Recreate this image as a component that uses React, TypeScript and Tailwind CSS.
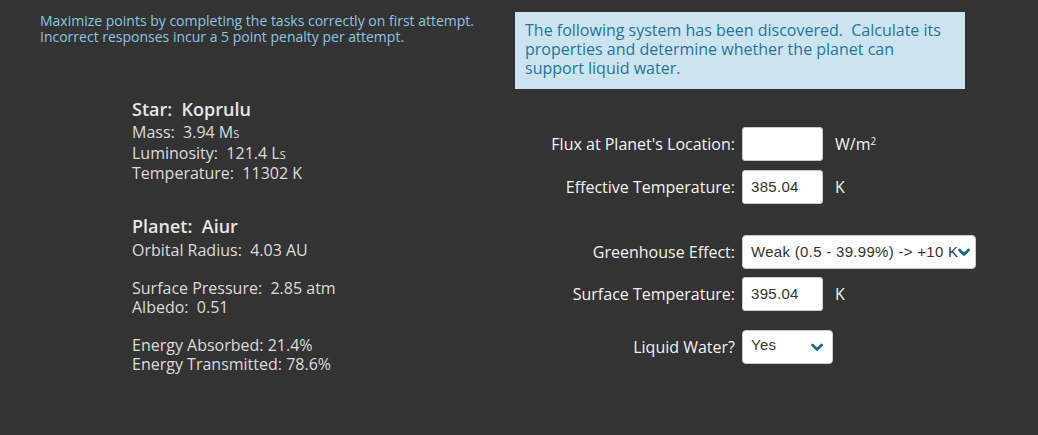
import React from "react";

const Chevron = () => (
  <svg width="12" height="9" viewBox="0 0 12 9" className="shrink-0">
    <path d="M1.5 2 L6 6.5 L10.5 2" fill="none" stroke="#1b6a8a" strokeWidth="2.8" strokeLinecap="round" strokeLinejoin="round" />
  </svg>
);

const Sub = ({ c }: { c: string }) => <span className="text-[11px]">{c}</span>;

const arial = { fontFamily: '"Liberation Sans", Arial, sans-serif' };

export default function App() {
  return (
    <div className="w-[1038px] h-[435px] bg-[#333333] overflow-hidden" style={{ fontFamily: '"Open Sans", sans-serif' }}>
      <div className="flex h-[89px] pt-[12px]">
        <div className="ml-[40px] w-[475px] mt-[1px] text-[14px] leading-[16px] text-[#8ac6e2]">
          Maximize points by completing the tasks correctly on first attempt.
          <br />
          Incorrect responses incur a 5 point penalty per attempt.
        </div>
        <div className="w-[450px] h-[77px] bg-[#cce4ef] pl-[10px] pt-[9px] text-[16px] leading-[19px] text-[#1f74a0] whitespace-pre">
          {"The following system has been discovered.  Calculate its\nproperties and determine whether the planet can\nsupport liquid water."}
        </div>
      </div>
      <div className="flex items-start">
        <div className="ml-[132px] w-[418px] mt-[8px] text-[16px] text-[#dcdcdc]">
          <div className="text-[18px] font-semibold leading-[24px] text-[#e6e6e6] mb-[2px]">Star:&nbsp; Koprulu</div>
          <div className="leading-[18.5px]">
            <div>Mass:&nbsp; 3.94 M<Sub c="S" /></div>
            <div>Luminosity:&nbsp; 121.4 L<Sub c="S" /></div>
            <div>Temperature:&nbsp; 11302 K</div>
          </div>
          <div className="text-[18px] font-semibold leading-[24px] text-[#e6e6e6] mt-[31px] mb-[3px]">Planet:&nbsp; Aiur</div>
          <div className="leading-[19px]">
            <div>Orbital Radius:&nbsp; 4.03 AU</div>
            <div className="h-[19px]" />
            <div>Surface Pressure:&nbsp; 2.85 atm</div>
            <div>Albedo:&nbsp; 0.51</div>
            <div className="h-[19px]" />
            <div>Energy Absorbed: 21.4%</div>
            <div>Energy Transmitted: 78.6%</div>
          </div>
        </div>
        <div className="mt-[38px] text-[16px] text-[#f2f2f2]">
          <div className="flex items-center h-[34px]">
            <div className="w-[186px] text-right pr-[1px] whitespace-nowrap">Flux at Planet's Location:</div>
            <div className="ml-[6px] w-[81px] h-[34px] bg-white border border-[#cccccc] rounded-[3px]" />
            <div className="ml-[12px]">W/m<sup className="text-[10px]">2</sup></div>
          </div>
          <div className="flex items-center h-[34px] mt-[9px]">
            <div className="w-[186px] text-right pr-[1px] whitespace-nowrap">Effective Temperature:</div>
            <div className="ml-[6px] w-[81px] h-[34px] bg-white border border-[#cccccc] rounded-[3px] flex items-center pl-[8px] text-[15px] tracking-[0.3px] text-[#333333]" style={arial}>385.04</div>
            <div className="ml-[12px]">K</div>
          </div>
          <div className="flex items-center h-[34px] mt-[31px]">
            <div className="w-[186px] text-right pr-[1px] whitespace-nowrap">Greenhouse Effect:</div>
            <div className="ml-[6px] w-[234px] h-[34px] bg-white border border-[#cccccc] rounded-[4px] flex items-center pl-[8px] text-[15px] tracking-[0.3px] text-[#333333] whitespace-nowrap" style={arial}>
              <span>Weak (0.5 - 39.99%) -&gt; +10 K</span>
              <Chevron />
            </div>
          </div>
          <div className="flex items-center h-[34px] mt-[8px]">
            <div className="w-[186px] text-right pr-[1px] whitespace-nowrap">Surface Temperature:</div>
            <div className="ml-[6px] w-[81px] h-[34px] bg-white border border-[#cccccc] rounded-[3px] flex items-center pl-[8px] text-[15px] tracking-[0.3px] text-[#333333]" style={arial}>395.04</div>
            <div className="ml-[12px]">K</div>
          </div>
          <div className="flex items-center h-[34px] mt-[19px]">
            <div className="w-[186px] text-right pr-[1px] whitespace-nowrap">Liquid Water?</div>
            <div className="ml-[6px] w-[91px] h-[34px] bg-white border border-[#cccccc] rounded-[4px] flex items-center justify-between pl-[8px] pr-[9px] text-[15px] tracking-[0.3px] text-[#333333]" style={arial}>
              <span className="-mt-[3px]">Yes</span>
              <Chevron />
            </div>
          </div>
        </div>
      </div>
    </div>
  );
}
